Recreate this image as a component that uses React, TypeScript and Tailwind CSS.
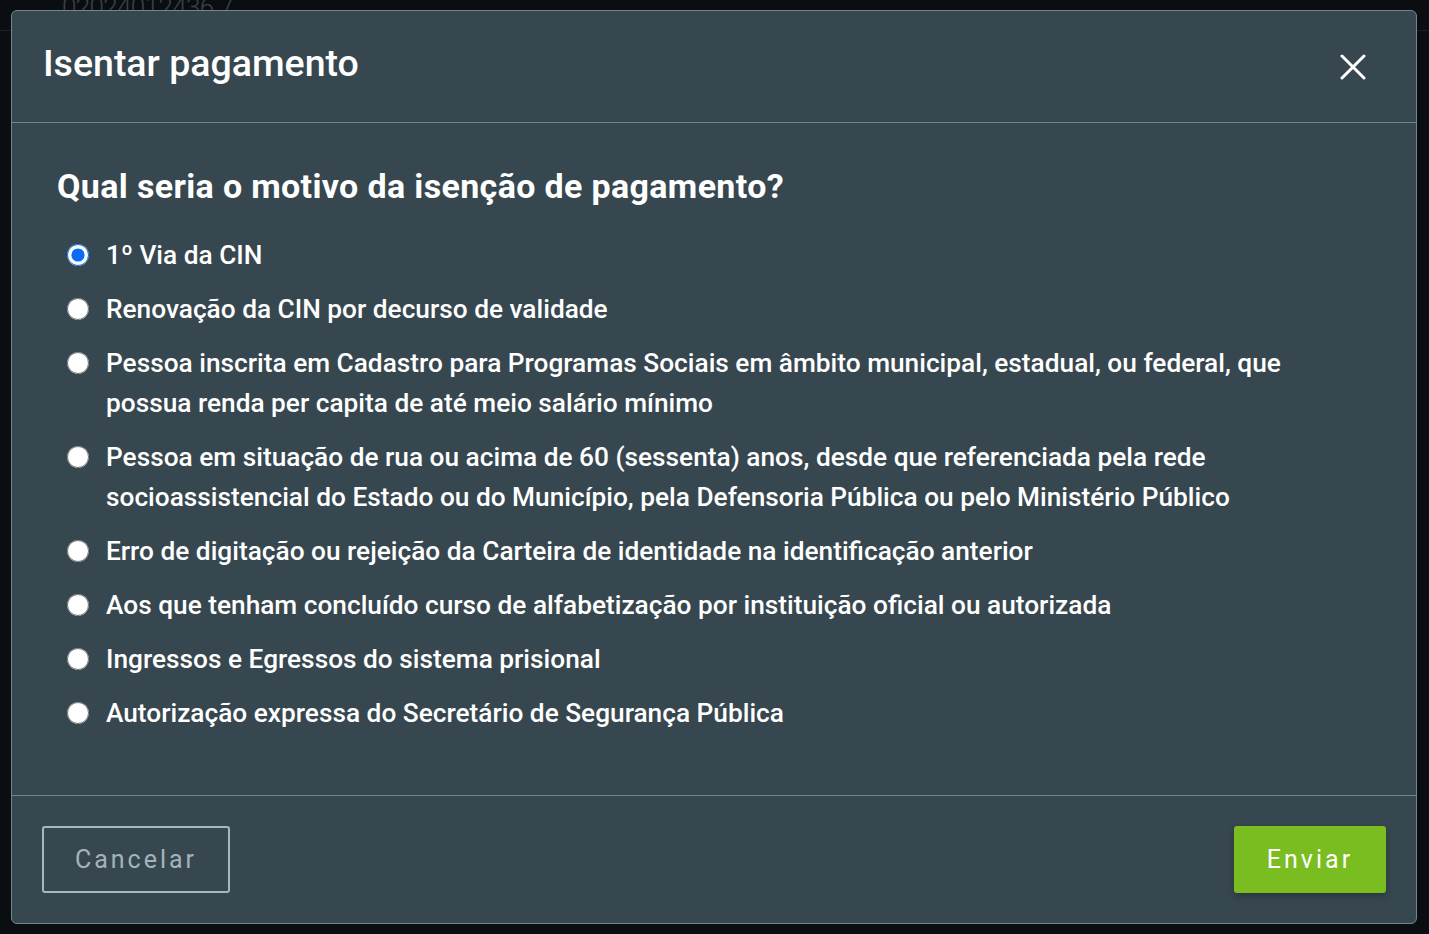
import { useState } from 'react';

const motivos = [
  '1º Via da CIN',
  'Renovação da CIN por decurso de validade',
  'Pessoa inscrita em Cadastro para Programas Sociais em âmbito municipal, estadual, ou federal, que possua renda per capita de até meio salário mínimo',
  'Pessoa em situação de rua ou acima de 60 (sessenta) anos, desde que referenciada pela rede socioassistencial do Estado ou do Município, pela Defensoria Pública ou pelo Ministério Público',
  'Erro de digitação ou rejeição da Carteira de identidade na identificação anterior',
  'Aos que tenham concluído curso de alfabetização por instituição oficial ou autorizada',
  'Ingressos e Egressos do sistema prisional',
  'Autorização expressa do Secretário de Segurança Pública',
];

export default function App() {
  const [motivo, setMotivo] = useState(0);

  return (
    <div className="relative min-h-[934px] bg-[#0b0e11] font-['Roboto',sans-serif] overflow-hidden">
      {/* page behind the modal */}
      <div className="absolute inset-0 flex flex-col">
        <div className="h-[30px] flex items-start pl-[62px] text-[26px] leading-[14px] text-[#3b4248] font-light tracking-tight">
          02024012436 7
        </div>
        <div className="flex-1 border-t border-[#1a1f23]" />
      </div>

      <div className="relative pt-[10px] pl-[11px] pr-[12px] pb-[10px]">
        <div className="w-[1406px] h-[914px] flex flex-col bg-[#37474f] border border-[#71858f] rounded-[6px]">
          {/* header */}
          <div className="h-[112px] flex items-center justify-between pl-[31px] pr-[50px] border-b border-[#71858f] pb-[5px]">
            <h1 className="text-[37.5px] font-medium text-white leading-none">Isentar pagamento</h1>
            <button className="text-white pt-[6px]" aria-label="Fechar">
              <svg width="26" height="26" viewBox="0 0 26 26" fill="none">
                <path d="M2 2L24 24M24 2L2 24" stroke="currentColor" strokeWidth="3" strokeLinecap="round" />
              </svg>
            </button>
          </div>

          {/* body */}
          <div className="flex-1 pl-[45px] pr-[40px] pt-[45px]">
            <h2 className="text-[34px] leading-[36px] font-bold text-white tracking-[0.35px]">
              Qual seria o motivo da isenção de pagamento?
            </h2>
            <div className="mt-[32px] flex flex-col gap-[14.7px]">
              {motivos.map((m, i) => (
                <label key={i} className="flex items-start gap-[17px] cursor-pointer pl-[10px]">
                  <input
                    type="radio"
                    name="motivo"
                    checked={motivo === i}
                    onChange={() => setMotivo(i)}
                    className="w-[22px] h-[22px] mt-[8px] m-0 shrink-0 accent-[#0a6cf5]"
                  />
                  <span className="text-[26.25px] leading-[39.5px] font-medium text-white max-w-[1215px]">{m}</span>
                </label>
              ))}
            </div>
          </div>

          {/* footer */}
          <div className="h-[128px] flex items-center justify-between px-[30px] border-t border-[#71858f]">
            <button className="w-[188px] h-[67px] border-2 border-[#a7b7c0] rounded-[3px] text-[25px] tracking-[3px] text-[#a3b3bc]">
              Cancelar
            </button>
            <button className="w-[152px] h-[67px] bg-[#79bd20] rounded-[3px] text-[25px] tracking-[3px] text-white shadow-[0_3px_6px_rgba(0,0,0,0.25)]">
              Enviar
            </button>
          </div>
        </div>
      </div>
    </div>
  );
}
